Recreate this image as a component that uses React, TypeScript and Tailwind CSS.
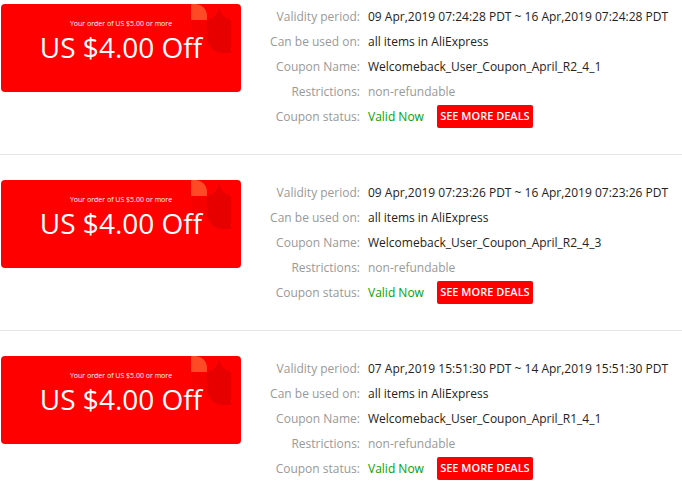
import React from "react";

type Coupon = {
  validity: string;
  name: string;
};

const coupons: Coupon[] = [
  {
    validity: "09 Apr,2019 07:24:28 PDT ~ 16 Apr,2019 07:24:28 PDT",
    name: "Welcomeback_User_Coupon_April_R2_4_1",
  },
  {
    validity: "09 Apr,2019 07:23:26 PDT ~ 16 Apr,2019 07:23:26 PDT",
    name: "Welcomeback_User_Coupon_April_R2_4_3",
  },
  {
    validity: "07 Apr,2019 15:51:30 PDT ~ 14 Apr,2019 15:51:30 PDT",
    name: "Welcomeback_User_Coupon_April_R1_4_1",
  },
];

function CouponCard() {
  return (
    <div className="relative ml-[1px] h-[88px] w-[240px] shrink-0 overflow-hidden rounded-[4px] bg-[#ff0000] text-white">
      <svg className="absolute left-0 top-0" width="240" height="88" viewBox="0 0 240 88">
        <path d="M190 16 H206 V36 H190 Z" fill="#f70000" />
        <path d="M190 0 H194 A12 12 0 0 1 206 12 V16 H190 Z" fill="#ff4a26" />
        <path d="M206 16 A16 16 0 0 0 218 2 A16 16 0 0 0 230 16 Z" fill="#e80000" />
        <path d="M206 16 H230 V49 H222 A16 16 0 0 1 206 33 Z" fill="#e60000" />
      </svg>
      <div className="relative flex flex-col items-center">
        <div className="mt-[15px] text-[7px] leading-[10px]">Your order of US $5.00 or more</div>
        <div className="mt-[3px] text-[28px] leading-[30px]">US $4.00 Off</div>
      </div>
    </div>
  );
}

function Row({ label, children }: { label: string; children: React.ReactNode }) {
  return (
    <div className="flex h-[25px] items-center">
      <div className="w-[119px] shrink-0 text-right text-[#999999]">{label}</div>
      <div className="flex items-center pl-[8px]">{children}</div>
    </div>
  );
}

export default function App() {
  return (
    <div
      className="w-[682px] bg-white text-[12px]"
      style={{ fontFamily: '"Open Sans", "Liberation Sans", sans-serif' }}
    >
      {coupons.map((c, i) => (
        <div
          key={i}
          className={`flex border-b border-[#e6e6e6] pb-[25px] ${i === 0 ? "pt-[4px]" : "pt-[25px]"}`}
        >
          <CouponCard />
          <div className="flex flex-col text-[#222222]">
            <Row label="Validity period:">{c.validity}</Row>
            <Row label="Can be used on:">all items in AliExpress</Row>
            <Row label="Coupon Name:">{c.name}</Row>
            <Row label="Restrictions:">
              <span className="text-[#999999]">non-refundable</span>
            </Row>
            <Row label="Coupon status:">
              <span className="text-[#00a300]">Valid Now</span>
              <button className="ml-[13px] flex h-[23px] w-[96px] items-center justify-center rounded-[2px] bg-[#ff0000] text-[11px] font-semibold text-white">
                SEE MORE DEALS
              </button>
            </Row>
          </div>
        </div>
      ))}
    </div>
  );
}
